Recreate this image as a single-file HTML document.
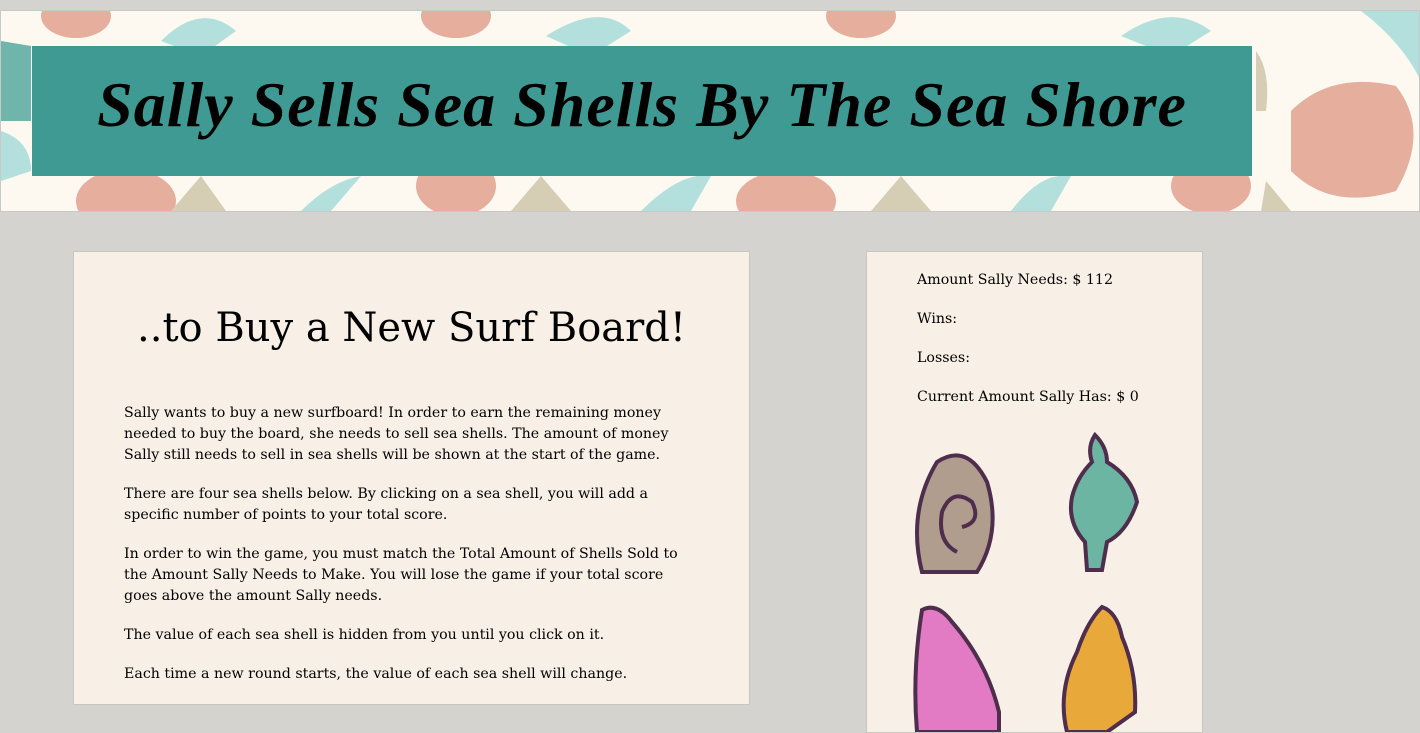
<!DOCTYPE html>
<html><head><style>
body{margin:0;width:1420px;height:724px;overflow:hidden;background:#d4d3cf;font-family:"DejaVu Serif",serif;position:relative}
.hdr{position:absolute;left:0;top:10px;width:1418px;height:200px;background:#fdf9f1;border:1px solid #c8c8c8;overflow:hidden}
.ttl{position:absolute;left:32px;top:46px;width:1220px;height:130px;background:#3f9a93;text-align:center;font:italic bold 64px "Liberation Serif",serif;line-height:118px;color:#000;letter-spacing:1px}
.p1{position:absolute;left:73px;top:251px;width:675px;height:452px;background:#f8f0e7;border:1px solid #c9c5bf}
.p1 h1{font-weight:normal;font-size:40px;margin:0;position:absolute;left:0;width:675px;text-align:center;top:53px}
.p1 .t{position:absolute;left:50px;top:151px;width:555px;font-size:14.2px;line-height:21px}
.p1 p{margin:0 0 18px}
.p2{position:absolute;left:866px;top:251px;width:335px;height:480px;background:#f8f0e7;border:1px solid #c9c5bf}
.p2 p{position:absolute;left:50px;margin:0;font-size:14.2px}
</style></head><body>
<div class="hdr">
<svg width="1420" height="200" style="position:absolute;left:0;top:0">
<ellipse cx="75" cy="5" rx="35" ry="22" fill="#e6ae9c"/><ellipse cx="455" cy="5" rx="35" ry="22" fill="#e6ae9c"/><ellipse cx="860" cy="5" rx="35" ry="22" fill="#e6ae9c"/>
<path d="M160 30 Q200 -10 235 20 L200 45Z" fill="#b3e0dc"/><path d="M545 25 Q600 -10 630 20 L590 45Z" fill="#b3e0dc"/><path d="M1120 25 Q1170 -10 1210 20 L1170 45Z" fill="#b3e0dc"/>
<ellipse cx="125" cy="190" rx="50" ry="32" fill="#e6ae9c"/><ellipse cx="455" cy="175" rx="40" ry="30" fill="#e6ae9c"/><ellipse cx="785" cy="190" rx="50" ry="30" fill="#e6ae9c"/><ellipse cx="1210" cy="175" rx="40" ry="28" fill="#e6ae9c"/>
<path d="M170 200 L200 165 L225 200Z" fill="#d6cdb5"/><path d="M510 200 L540 165 L570 200Z" fill="#d6cdb5"/><path d="M870 200 L900 165 L930 200Z" fill="#d6cdb5"/>
<path d="M300 200 Q330 170 360 165 L330 200Z" fill="#b3e0dc"/><path d="M640 200 Q680 160 710 165 L690 200Z" fill="#b3e0dc"/><path d="M1010 200 Q1040 160 1070 165 L1050 200Z" fill="#b3e0dc"/>
<path d="M1290 100 Q1330 60 1395 75 Q1430 120 1395 180 Q1330 200 1290 160Z" fill="#e6ae9c"/>
<path d="M1360 0 Q1400 30 1420 70 L1420 0Z" fill="#b3e0dc"/>
<path d="M0 30 L30 35 L30 110 L0 110Z" fill="#6fb5ac"/><path d="M0 120 Q30 130 30 160 L0 170Z" fill="#b3e0dc"/>
<path d="M1255 40 Q1270 60 1265 100 L1255 100Z" fill="#d6cdb5"/><path d="M1265 170 L1290 200 L1260 200Z" fill="#d6cdb5"/>
</svg>
</div>
<div class="ttl">Sally Sells Sea Shells By The Sea Shore</div>
<div class="p1"><h1>..to Buy a New Surf Board!</h1>
<div class="t">
<p>Sally wants to buy a new surfboard! In order to earn the remaining money needed to buy the board, she needs to sell sea shells. The amount of money Sally still needs to sell in sea shells will be shown at the start of the game.</p>
<p>There are four sea shells below. By clicking on a sea shell, you will add a specific number of points to your total score.</p>
<p>In order to win the game, you must match the Total Amount of Shells Sold to the Amount Sally Needs to Make. You will lose the game if your total score goes above the amount Sally needs.</p>
<p>The value of each sea shell is hidden from you until you click on it.</p>
<p>Each time a new round starts, the value of each sea shell will change.</p>
</div></div>
<div class="p2">
<p style="top:20px">Amount Sally Needs: $ 112</p>
<p style="top:59px">Wins:</p>
<p style="top:98px">Losses:</p>
<p style="top:137px">Current Amount Sally Has: $ 0</p>
<svg width="335" height="480" style="position:absolute;left:0;top:0" stroke="#4e2e4c" stroke-width="4">
<path d="M55 320 Q40 260 70 210 Q100 190 120 230 Q135 280 110 320Z" fill="#b19d8d"/>
<path d="M90 300 Q70 290 75 260 Q85 235 105 250 Q115 270 95 275" fill="none"/>
<path d="M228 183 Q240 195 240 210 Q265 225 270 250 Q260 280 240 290 L235 318 L220 318 L218 290 Q200 270 205 245 Q210 225 225 210 Q220 195 228 183Z" fill="#6db5a3"/>
<path d="M55 358 Q70 350 85 370 Q120 410 132 460 L132 480 L50 480 Q45 420 55 358Z" fill="#e27ac4"/>
<path d="M235 355 Q250 360 255 385 Q270 420 268 460 L240 480 L200 480 Q190 440 210 400 Q220 370 235 355Z" fill="#e8a93a"/>
</svg>
</div>
</body></html>
